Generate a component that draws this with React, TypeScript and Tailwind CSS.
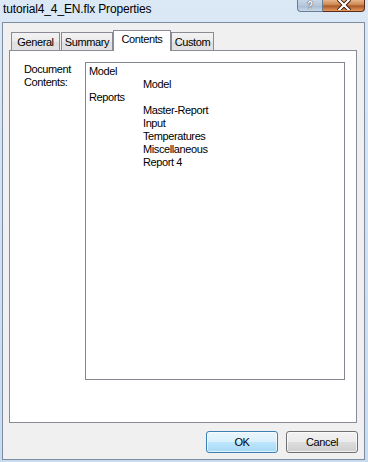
import React from 'react';

const font = "font-['Liberation_Sans',Arial,sans-serif]";

const tabs = [
  { label: 'General', width: 'w-[49px]', gap: 'ml-0' },
  { label: 'Summary', width: 'w-[52px]', gap: 'ml-[1px]' },
  { label: 'Contents', width: 'w-[58px]', gap: 'ml-0', active: true },
  { label: 'Custom', width: 'w-[43px]', gap: 'ml-0' },
];

const entries = [
  { text: 'Model', indent: false },
  { text: 'Model', indent: true },
  { text: 'Reports', indent: false },
  { text: 'Master-Report', indent: true },
  { text: 'Input', indent: true },
  { text: 'Temperatures', indent: true },
  { text: 'Miscellaneous', indent: true },
  { text: 'Report 4', indent: true },
];

const TitleButtons: React.FC = () => (
  <div className="flex ml-auto mr-[3px] h-[12px]">
    <div className="w-[26px] h-full flex items-end justify-center rounded-bl-[4px] border border-t-0 border-[#6b7d95] bg-[linear-gradient(to_bottom,#c8d6e6_0%,#b6c7dc_50%,#a8bcd4_55%,#c9d9ea_100%)]">
      <span className="text-[10px] leading-[10px] font-bold text-white [text-shadow:0_0_1px_#2c3e57,0_0_1px_#2c3e57]">?</span>
    </div>
    <div className="w-[42px] h-full flex items-end justify-center rounded-br-[4px] border border-t-0 border-l-0 border-[#5b2a1a] bg-[linear-gradient(to_bottom,#e7b68c_0%,#d08a55_40%,#a85a2c_55%,#c8743e_75%,#e39a5e_100%)]">
      <svg width="14" height="10" viewBox="0 0 14 10" className="mb-[1px]">
        <path d="M2 0 L12 10 M12 0 L2 10" stroke="#3a1508" strokeWidth="4" strokeLinecap="square" />
        <path d="M2 0 L12 10 M12 0 L2 10" stroke="#ffffff" strokeWidth="2.2" strokeLinecap="square" />
      </svg>
    </div>
  </div>
);

const Tab: React.FC<{ label: string; width: string; gap: string; active?: boolean }> = ({ label, width, gap, active }) =>
  active ? (
    <div
      className={`${width} ${gap} relative z-10 h-[21px] -mb-[1px] border border-b-0 border-[#898c95] bg-white flex justify-center pt-[2px] text-[11px] leading-[13px] tracking-[-0.4px] text-black`}
    >
      {label}
    </div>
  ) : (
    <div
      className={`${width} ${gap} h-[18px] border border-b-0 border-[#898c95] bg-[linear-gradient(to_bottom,#f3f3f3_0%,#ebebeb_50%,#dedede_50%,#e3e3e3_100%)] flex justify-center pt-[3px] text-[11px] leading-[13px] tracking-[-0.4px] text-black`}
    >
      {label}
    </div>
  );

export default function App() {
  return (
    <div
      className={`${font} w-[368px] h-[462px] flex flex-col bg-[linear-gradient(to_bottom,#dbe8f6_0%,#d3e2f3_40%,#c9dbef_100%)] overflow-hidden`}
    >
      <div className="h-[22px] flex items-start shrink-0">
        <span className="pl-[3px] mt-[2px] text-[12px] leading-[14px] tracking-[-0.15px] text-black">
          tutorial4_4_EN.flx Properties
        </span>
        <TitleButtons />
      </div>

      <div className="flex-1 ml-[2px] mr-[3px] mb-[2px] border border-[#7d8ca2] bg-[#f0f0f0] flex flex-col pt-[7px] pb-[6px]">
        <div className="flex items-end ml-[8px]">
          {tabs.map(t => (
            <Tab key={t.label} {...t} />
          ))}
        </div>

        <div className="flex-1 ml-[6px] mr-[7px] border border-[#898c95] bg-white flex pt-[11px] pl-[14px] pr-[11px] pb-[42px]">
          <div className="w-[61px] shrink-0 pt-[1px] text-[11px] leading-[13px] tracking-[-0.4px] text-black">
            Document
            <br />
            Contents:
          </div>
          <div className="flex-1 border border-[#828790] bg-white pt-[2px] pl-[3px]">
            {entries.map((e, i) => (
              <div
                key={i}
                className={`text-[11px] leading-[13px] tracking-[-0.4px] text-black ${e.indent ? 'pl-[54px]' : ''}`}
              >
                {e.text}
              </div>
            ))}
          </div>
        </div>

        <div className="flex justify-end gap-[8px] mt-[8px] mr-[6px]">
          <button className="w-[72px] h-[22px] rounded-[3px] border border-[#3c7fb1] bg-[linear-gradient(to_bottom,#eaf6fd_0%,#d9f0fc_50%,#bee6fd_50%,#a7d9f5_100%)] shadow-[inset_0_0_0_1px_#ffffffa0] text-[11px] tracking-[-0.4px] text-black">
            OK
          </button>
          <button className="w-[72px] h-[22px] rounded-[3px] border border-[#707070] bg-[linear-gradient(to_bottom,#f2f2f2_0%,#ebebeb_50%,#dddddd_50%,#cfcfcf_100%)] shadow-[inset_0_0_0_1px_#ffffffb0] text-[11px] tracking-[-0.4px] text-black">
            Cancel
          </button>
        </div>
      </div>
    </div>
  );
}
